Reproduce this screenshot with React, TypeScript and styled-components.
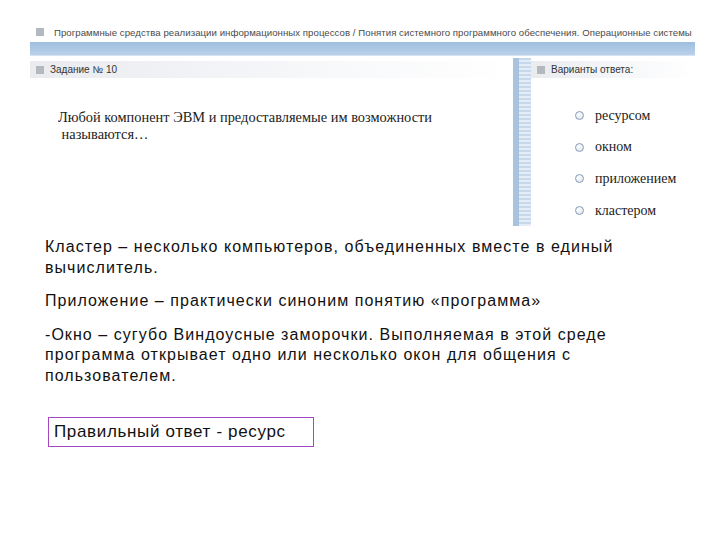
import React from 'react';
import styled, { createGlobalStyle } from 'styled-components';

const GlobalStyle = createGlobalStyle`
  html, body {
    margin: 0;
    padding: 0;
    background: #fff;
  }
`;

const Page = styled.div`
  width: 720px;
  height: 540px;
  padding-top: 22px;
  box-sizing: border-box;
  overflow: hidden;
`;

const Shot = styled.div`
  margin-left: 30px;
  width: 665px;
  display: flex;
  flex-direction: column;
`;

const Square = styled.span`
  flex: none;
  width: 8px;
  height: 8px;
  background: #b4b9c0;
`;

const TitleRow = styled.div`
  height: 20px;
  display: flex;
  align-items: center;
  gap: 10px;
  padding-left: 6px;
  font-family: 'Liberation Sans', Arial, sans-serif;
  font-size: 9.6px;
  letter-spacing: 0.06px;
  color: #4a4a4a;
  white-space: nowrap;
  overflow: hidden;
`;

const BlueBar = styled.div`
  height: 13px;
  background: linear-gradient(#9fbfdf, #b9d1ea);
  border-bottom: 1px solid #d6e3f1;
`;

const Panels = styled.div`
  display: grid;
  grid-template-columns: 483px 18px 164px;
  height: 170px;
`;

const PanelHead = styled.div`
  margin-top: 5px;
  height: 17px;
  display: flex;
  align-items: center;
  gap: 6px;
  padding-left: 6px;
  font-family: 'Liberation Sans', Arial, sans-serif;
  font-size: 10px;
  color: #333;
  background: linear-gradient(90deg, #e9ebef, #f7f8fa 60%, #fff);
`;

const LeftPanel = styled.div`
  display: flex;
  flex-direction: column;
`;

const Question = styled.div`
  margin: 31px 0 0 28px;
  width: 390px;
  max-height: 32px;
  overflow: hidden;
  font-family: 'Liberation Serif', 'Times New Roman', serif;
  font-size: 14.4px;
  line-height: 17px;
  color: #222;
`;

const Divider = styled.div`
  margin-top: 2px;
  background:
    linear-gradient(90deg, #a9c2dd 0 6px, transparent 6px),
    repeating-linear-gradient(#c6d8ec 0 2px, #e4edf7 2px 4px);
`;

const RightPanel = styled.div`
  display: flex;
  flex-direction: column;
`;

const Options = styled.ul`
  list-style: none;
  margin: 29px 0 0 44px;
  padding: 0;
  display: flex;
  flex-direction: column;
  gap: 14.7px;
`;

const Option = styled.li`
  display: flex;
  align-items: center;
  gap: 11px;
  height: 17px;
  font-family: 'Liberation Serif', 'Times New Roman', serif;
  font-size: 14px;
  color: #222;
`;

const Radio = styled.span`
  flex: none;
  width: 7px;
  height: 7px;
  border-radius: 50%;
  border: 1px solid #8a9cb8;
  background: radial-gradient(circle at 40% 35%, #ffffff, #d8dfe9);
`;

const Notes = styled.div`
  margin: 11px 0 0 45px;
  width: 660px;
  font-family: 'Liberation Sans', Arial, sans-serif;
  font-size: 16px;
  letter-spacing: 1.05px;
  line-height: 20.6px;
  color: #111;
`;

const Para = styled.p`
  margin: 0 0 13px;
`;

const AnswerBox = styled.div`
  margin: 30px 0 0 48px;
  width: 259px;
  height: 28px;
  border: 1px solid #a548c6;
  display: flex;
  align-items: center;
  padding-left: 5px;
  box-sizing: content-box;
  font-family: 'Liberation Sans', Arial, sans-serif;
  font-size: 17px;
  letter-spacing: 0.65px;
  color: #111;
`;

const options = ['ресурсом', 'окном', 'приложением', 'кластером'];

export default function App() {
  return (
    <Page>
      <GlobalStyle />
      <Shot>
        <TitleRow>
          <Square />
          Программные средства реализации информационных процессов / Понятия системного программного обеспечения. Операционные системы
        </TitleRow>
        <BlueBar />
        <Panels>
          <LeftPanel>
            <PanelHead>
              <Square />
              Задание № 10
            </PanelHead>
            <Question>
              Любой компонент ЭВМ и предоставляемые им возможности
              <br />
              &nbsp;называются…
            </Question>
          </LeftPanel>
          <Divider />
          <RightPanel>
            <PanelHead>
              <Square />
              Варианты ответа:
            </PanelHead>
            <Options>
              {options.map(o => (
                <Option key={o}>
                  <Radio />
                  {o}
                </Option>
              ))}
            </Options>
          </RightPanel>
        </Panels>
      </Shot>
      <Notes>
        <Para>
          Кластер – несколько компьютеров, объединенных вместе в единый
          <br />
          вычислитель.
        </Para>
        <Para>Приложение – практически синоним понятию «программа»</Para>
        <Para>
          -Окно – сугубо Виндоусные заморочки. Выполняемая в этой среде
          <br />
          программа открывает одно или несколько окон для общения с
          <br />
          пользователем.
        </Para>
      </Notes>
      <AnswerBox>Правильный ответ - ресурс</AnswerBox>
    </Page>
  );
}
